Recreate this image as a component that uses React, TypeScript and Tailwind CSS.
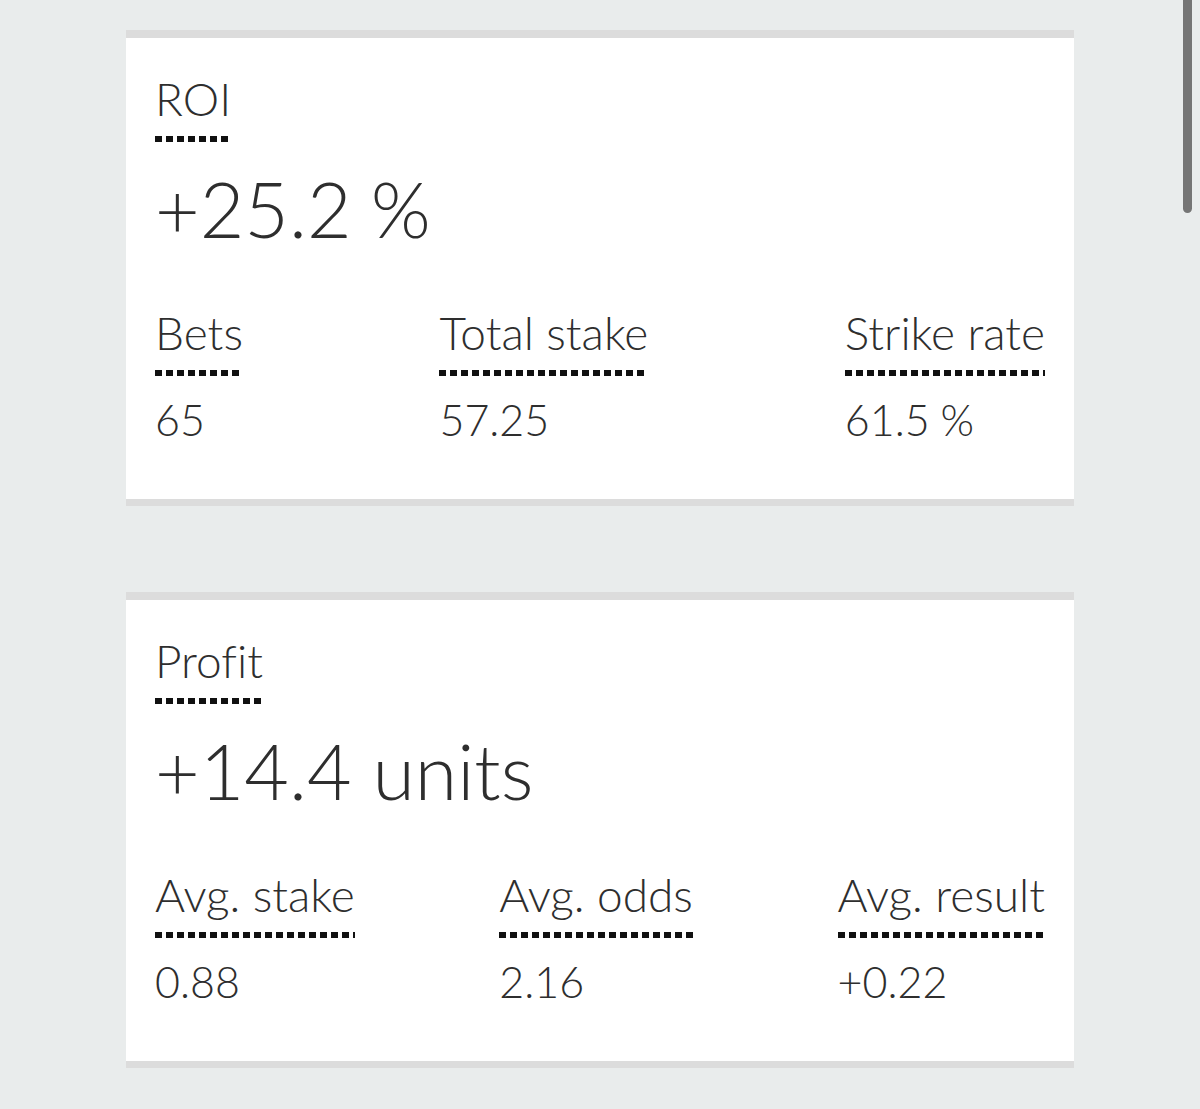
import React from "react";

type Stat = { label: string; value: string };

const dots =
  "inline-block h-[6px] bg-[linear-gradient(to_right,#111_0_7px,transparent_7px_11px)] bg-[length:11px_6px] bg-repeat-x";

const Dotted = ({ text, className }: { text: string; className: string }) => (
  <div className="inline-flex flex-col">
    <span className={className}>{text}</span>
    <span className={`${dots} w-full mt-[14px]`} />
  </div>
);

const StatCard = ({
  title,
  big,
  stats,
}: {
  title: string;
  big: string;
  stats: Stat[];
}) => {
  return (
    <div className="bg-white border-t-[8px] border-b-[7px] border-[#dcdcdc] px-[29px] pt-[38px] pb-[58px]">
      <Dotted text={title} className="text-[46px] leading-[46px]" />
      <div className="text-[77px] leading-[76px] mt-[28px]">{big}</div>
      <div className="flex justify-between mt-[64px]">
        {stats.map((s) => (
          <div key={s.label} className="flex flex-col">
            <Dotted text={s.label} className="text-[46px] leading-[46px]" />
            <span className="text-[43px] leading-[42px] mt-[23px]">
              {s.value}
            </span>
          </div>
        ))}
      </div>
    </div>
  );
};

export default function App() {
  return (
    <div className="relative min-h-[1109px] bg-[#e9ecec] pt-[30px] font-['Lato',sans-serif] font-light text-[#2e2e2e] [font-variant-ligatures:none]">
      <div className="w-[948px] ml-[126px] flex flex-col gap-[86px]">
        <StatCard
          title="ROI"
          big={"+25.2\u202F%"}
          stats={[
            { label: "Bets", value: "65" },
            { label: "Total stake", value: "57.25" },
            { label: "Strike rate", value: "61.5\u202F%" },
          ]}
        />
        <StatCard
          title="Profit"
          big="+14.4 units"
          stats={[
            { label: "Avg. stake", value: "0.88" },
            { label: "Avg. odds", value: "2.16" },
            { label: "Avg. result", value: "+0.22" },
          ]}
        />
      </div>
      <div className="absolute top-0 left-[1183px] w-[9px] h-[213px] rounded-b-full bg-[#757575]" />
    </div>
  );
}
